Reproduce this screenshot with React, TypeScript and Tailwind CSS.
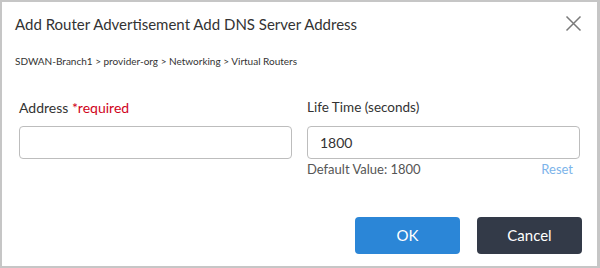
import React from "react";

export default function App() {
  return (
    <div
      className="w-[600px] h-[268px] bg-white border-t-2 border-l-2 border-b-2 border-r-[3px] border-[#c6c6c6] flex flex-col text-[#333]"
      style={{ fontFamily: "Lato, 'Open Sans', sans-serif" }}
    >
      <div className="flex items-center justify-between pl-[13px] pr-[15px] pt-[11px] h-[34px]">
        <h1 className="text-[15px] text-[#333] leading-none">Add Router Advertisement Add DNS Server Address</h1>
        <svg width="17" height="17" viewBox="0 0 17 17" className="mt-[-2px]">
          <path d="M1.5 1.5 L15.5 15.5 M15.5 1.5 L1.5 15.5" stroke="#7a7a7a" strokeWidth="1.5" />
        </svg>
      </div>
      <div className="pl-[13px] pt-[20px] text-[10px] text-[#333] leading-none">
        SDWAN-Branch1 &gt; provider-org &gt; Networking &gt; Virtual Routers
      </div>
      <div className="flex pl-[17px] pr-[17px] pt-[35px] gap-[15px]">
        <div className="w-[273px] flex flex-col">
          <div className="text-[14px] leading-none h-[15px]">
            Address <span className="text-[#d0021b]">*required</span>
          </div>
          <input className="mt-[10px] h-[33px] w-full border border-[#bdbdbd] rounded-[4px] px-3 text-[14px] outline-none" />
        </div>
        <div className="w-[273px] flex flex-col">
          <div className="text-[13.5px] leading-none h-[15px]">Life Time (seconds)</div>
          <input
            defaultValue="1800"
            className="mt-[10px] h-[33px] w-full border border-[#bdbdbd] rounded-[4px] px-[12px] text-[14px] text-[#333] outline-none"
            style={{ fontFamily: "Lato, sans-serif" }}
          />
          <div className="flex justify-between text-[13px] leading-none mt-[4px]">
            <span className="text-[#555]">Default Value: 1800</span>
            <span className="text-[#7cb4ea] mr-[7px]">Reset</span>
          </div>
        </div>
      </div>
      <div className="flex justify-end gap-[17px] pr-[15px] mt-auto mb-[12px]">
        <button className="w-[105px] h-[37px] rounded-[4px] bg-[#2b86d7] text-white text-[15px]">OK</button>
        <button className="w-[105px] h-[37px] rounded-[4px] bg-[#333a48] text-white text-[15px]">Cancel</button>
      </div>
    </div>
  );
}
